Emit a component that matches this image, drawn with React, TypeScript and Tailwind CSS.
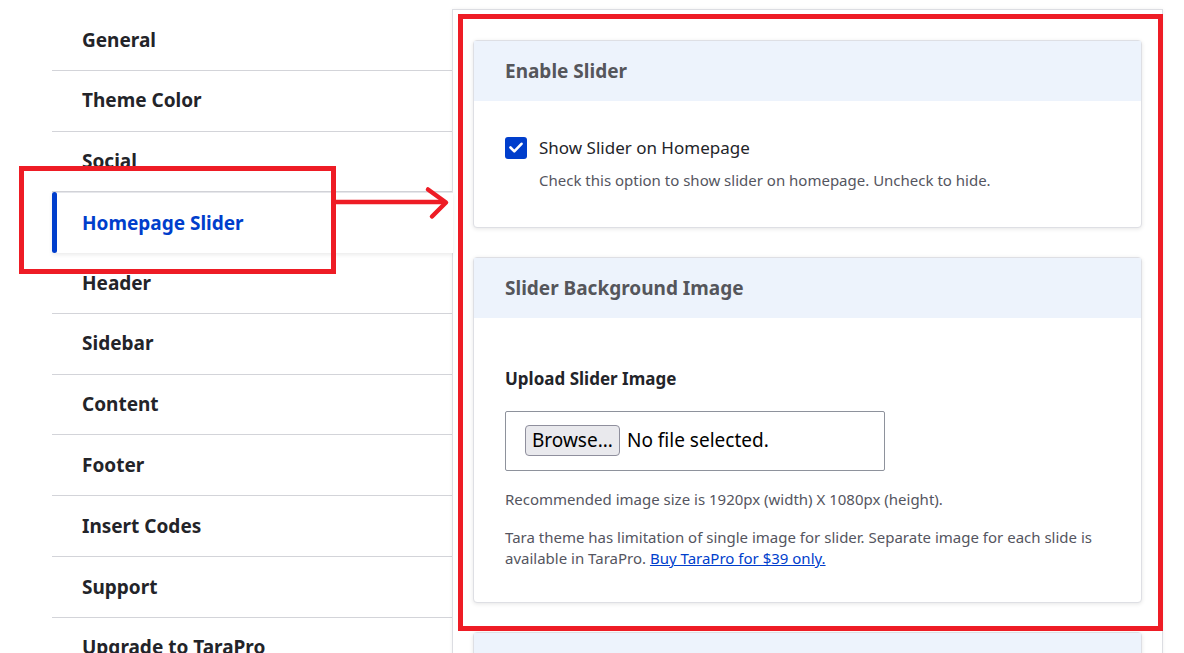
import React from 'react';

const tabs = [
  'General',
  'Theme Color',
  'Social',
  'Homepage Slider',
  'Header',
  'Sidebar',
  'Content',
  'Footer',
  'Insert Codes',
  'Support',
  'Upgrade to TaraPro',
];

const ACTIVE = 'Homepage Slider';

function TabItem({ label }: { label: string }) {
  if (label === ACTIVE) {
    return (
      <div className="relative z-10 flex h-[60.78px] w-[401px] items-center border-t border-[#e6e7eb] bg-white pl-[30px] shadow-[0_2px_4px_rgba(0,0,0,0.08)]">
        <span className="absolute left-0 top-[-1px] bottom-0 w-[5px] rounded-sm bg-[#003ecc]" />
        <span className="text-[19px] font-bold text-[#003ecc]">{label}</span>
      </div>
    );
  }
  return (
    <div className="flex h-[60.78px] items-center border-b border-[#d3d4d9] pl-[30px]">
      <span className="text-[19px] font-bold text-[#232429]">{label}</span>
    </div>
  );
}

function Card({ title, children }: { title?: string; children?: React.ReactNode }) {
  return (
    <div className="rounded-sm border border-[#dedfe4] bg-white shadow-[0_1px_4px_rgba(0,0,0,0.1)]">
      <div className="flex h-[60px] items-center bg-[#edf3fc] px-[31px]">
        {title && <h3 className="text-[19px] font-bold text-[#55565b]">{title}</h3>}
      </div>
      {children}
    </div>
  );
}

export default function App() {
  return (
    <div className="relative h-[653px] w-[1184px] overflow-hidden bg-white font-['Noto_Sans',sans-serif] text-[#232429]">
      <div className="flex items-start pl-[52px] pt-[9px]">
        {/* vertical tabs menu */}
        <nav className="mt-[1px] w-[400px] shrink-0">
          {tabs.map((t) => (
            <TabItem key={t} label={t} />
          ))}
        </nav>

        {/* tab pane */}
        <div className="w-[711px] shrink-0 border border-[#dcdde2] bg-white px-[20px] pt-[30px] shadow-[0_0_4px_rgba(0,0,0,0.06)]">
          <div className="flex flex-col gap-[29px]">
            <Card title="Enable Slider">
              <div className="px-[31px] pt-[34px] pb-[36px]">
                <label className="flex items-center gap-[12px]">
                  <span className="flex h-[22px] w-[22px] items-center justify-center rounded-[3px] bg-[#003ecc]">
                    <svg width="14" height="11" viewBox="0 0 14 11" fill="none">
                      <path d="M1.5 5.5l3.8 3.8L12.5 1.8" stroke="#fff" strokeWidth="2.6" strokeLinecap="round" strokeLinejoin="round" />
                    </svg>
                  </span>
                  <span className="text-[17px] text-[#232429]">Show Slider on Homepage</span>
                </label>
                <p className="mt-[8px] pl-[34px] text-[15px] text-[#545560]">
                  Check this option to show slider on homepage. Uncheck to hide.
                </p>
              </div>
            </Card>

            <Card title="Slider Background Image">
              <div className="px-[31px] pt-[48px] pb-[33px]">
                <div className="text-[17px] font-bold text-[#232429]">Upload Slider Image</div>
                <div className="mt-[19px] flex h-[60px] w-[380px] items-center gap-[7px] rounded-[2px] border border-[#8e929c] pl-[19px]">
                  <span className="flex h-[31px] items-center rounded-[4px] border border-[#8f8f9d] bg-[#e9e9ed] px-[6px] text-[19px] text-black">
                    Browse...
                  </span>
                  <span className="text-[19px] text-black">No file selected.</span>
                </div>
                <p className="mt-[17px] text-[15px] text-[#545560]">
                  Recommended image size is 1920px (width) X 1080px (height).
                </p>
                <p className="mt-[17px] text-[15px] leading-[21px] text-[#545560]">
                  Tara theme has limitation of single image for slider. Separate image for each slide is
                  <br />
                  available in TaraPro.{' '}
                  <a href="#" className="text-[#003ecc] underline">
                    Buy TaraPro for $39 only.
                  </a>
                </p>
              </div>
            </Card>

            <Card>
              <div className="h-[200px]" />
            </Card>
          </div>
        </div>
      </div>

      {/* highlight overlays */}
      <div className="pointer-events-none absolute left-[19px] top-[166px] z-20 h-[108px] w-[317px] border-[5px] border-[#ee1c25]" />
      <svg className="pointer-events-none absolute left-0 top-0 z-20" width="1184" height="653">
        <path d="M336 202H445" stroke="#ee1c25" strokeWidth="4.5" />
        <path d="M428 189.5L446 202.5L432 216.5" stroke="#ee1c25" strokeWidth="4.5" fill="none" strokeLinecap="round" strokeLinejoin="round" />
      </svg>
      <div className="pointer-events-none absolute left-[458px] top-[14px] z-20 h-[617px] w-[705px] border-[5px] border-[#ee1c25]" />
    </div>
  );
}
